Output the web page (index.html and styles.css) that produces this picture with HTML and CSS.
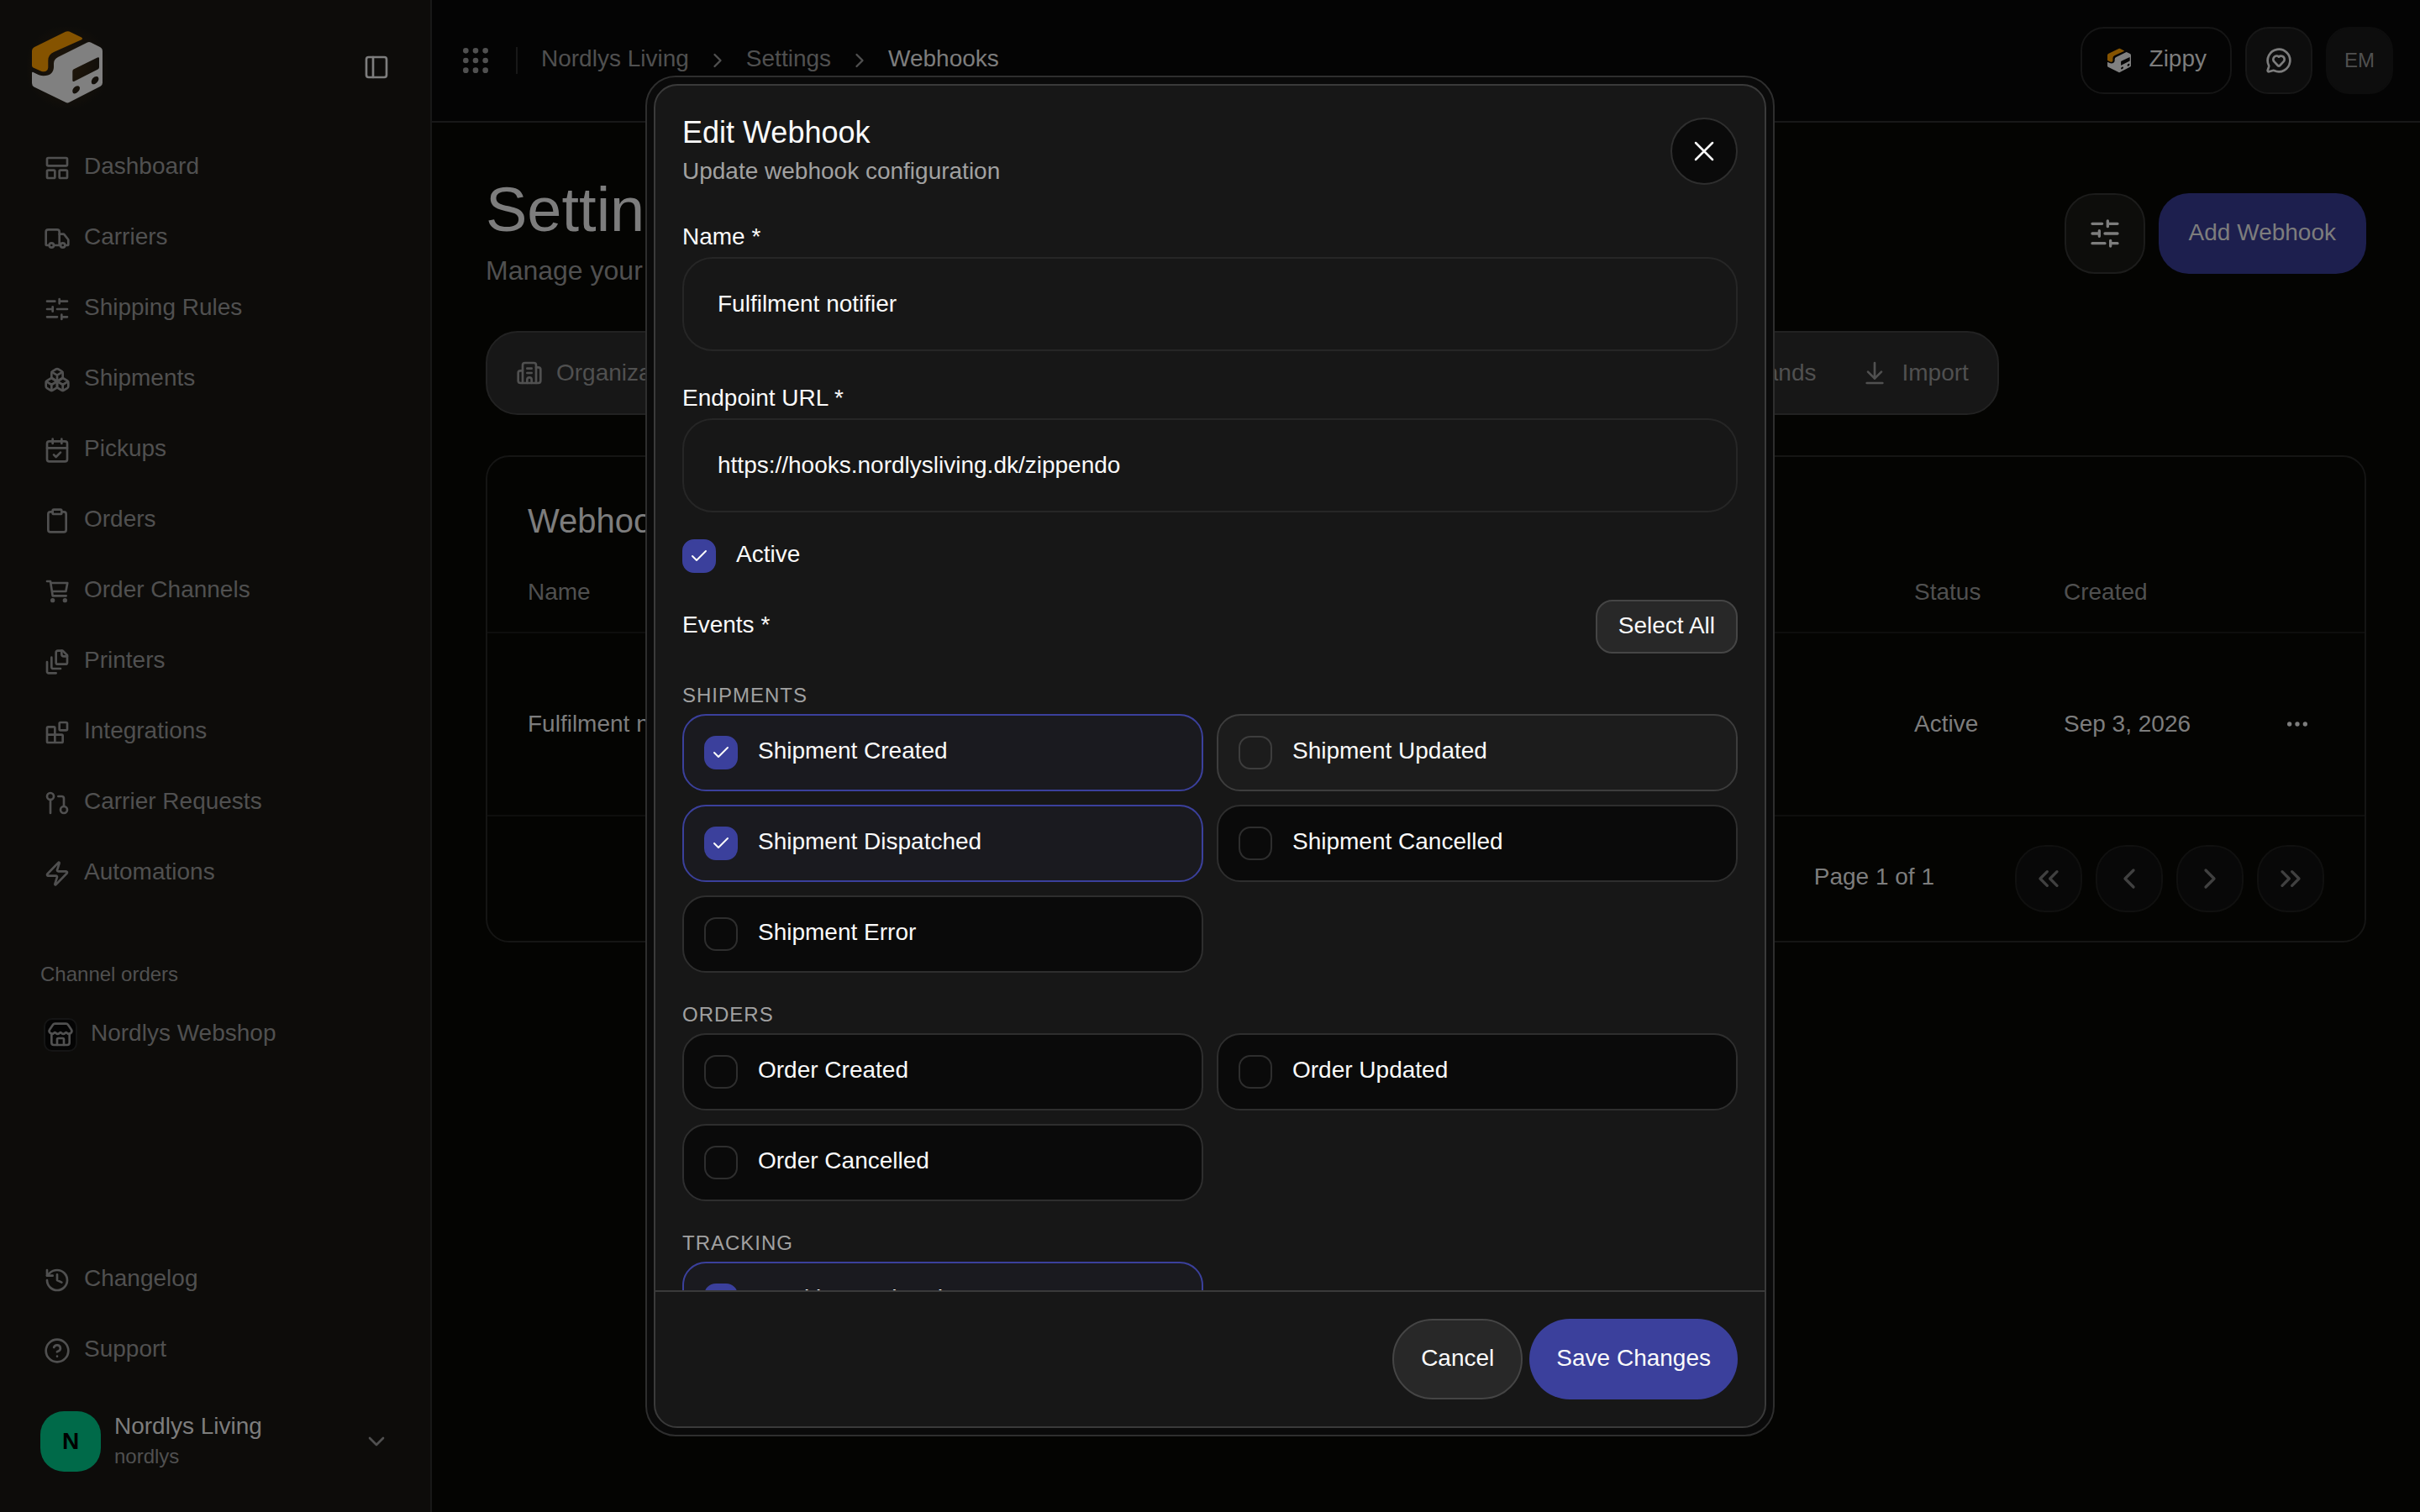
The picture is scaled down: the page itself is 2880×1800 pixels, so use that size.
FILE: index.html
```html
<!DOCTYPE html>
<html lang="en">
<head>
    <meta charset="UTF-8">
    <meta name="viewport" content="width=device-width, initial-scale=1.0">
    <title>Webhooks - Settings</title>
    <link rel="stylesheet" href="styles.css">
</head>
<body>
    <!-- Icon sprite -->
    <svg class="sprite" aria-hidden="true">
        <symbol id="i-logo" viewBox="0 0 96 96">
            <path fill="#855300" stroke="none" d="M46 5.8Q48.300 4.700 50.500 5.600L65 12.500Q67 14 65 15.300L32 30Q25.300 33 25.300 40V48.500Q24.500 54.500 17.500 53L7.500 48.500Q6 47.800 6 46V29Q6 25.500 9 24Z"/>
            <path fill="#808080" stroke="none" fill-rule="evenodd" d="M6 55Q6 53.400 7.600 54Q15 58.300 20 58.200Q31.500 58 32 48V43.500Q32 38.500 37 36L72 18.500Q74 17.500 76 18.500L87 24Q90 25.500 90 29V66.500Q90 69.500 87.500 70.800L50.500 89.800Q48.300 91 46 89.800L8.500 71.500Q6 70 6 67ZM55.500 50.500Q54.300 51 54.300 53V63.500Q54.300 65.700 56.500 64.800L84.500 50.500Q86 49.700 86 48V37.500Q86 35.500 84 36.500ZM54.300 76.500C54.300 80.500 58 80 60.500 77.500C63.500 75 64.200 70.500 60.500 70.200C57.500 70 54.300 73.200 54.300 76.500ZM76.800 65.500C76.800 69.300 80.500 69 83 66.500C86 64 86.500 59.500 83 59C80 58.800 76.800 62.200 76.800 65.500Z"/>
        </symbol>
        <symbol id="i-panel" viewBox="0 0 24 24"><rect width="18" height="18" x="3" y="3" rx="2"/><path d="M9 3v18"/></symbol>
        <symbol id="i-dashboard" viewBox="0 0 24 24"><rect width="18" height="7" x="3" y="3" rx="1"/><rect width="7" height="7" x="3" y="14" rx="1"/><rect width="7" height="7" x="14" y="14" rx="1"/></symbol>
        <symbol id="i-truck" viewBox="0 0 24 24"><path d="M14 18V6a2 2 0 0 0-2-2H4a2 2 0 0 0-2 2v11a1 1 0 0 0 1 1h2"/><path d="M15 18H9"/><path d="M19 18h2a1 1 0 0 0 1-1v-3.650a1 1 0 0 0-.220-.624l-3.480-4.350A1 1 0 0 0 17.520 8H14"/><circle cx="17" cy="18" r="2"/><circle cx="7" cy="18" r="2"/></symbol>
        <symbol id="i-sliders" viewBox="0 0 24 24"><path d="M10 5H3M12 19H3M14 3v4M16 17v4M21 12h-9M21 19h-5M21 5h-7M8 10v4M8 12H3"/></symbol>
        <symbol id="i-boxes" viewBox="0 0 24 24"><path d="M2.970 12.920A2 2 0 0 0 2 14.630v3.240a2 2 0 0 0 .970 1.710l3 1.800a2 2 0 0 0 2.060 0L12 19v-5.500l-5-3-4.030 2.420Z"/><path d="m7 16.500-4.740-2.850M7 16.500l5-3M7 16.500v5.170"/><path d="M12 13.500V19l3.970 2.380a2 2 0 0 0 2.060 0l3-1.800a2 2 0 0 0 .970-1.710v-3.240a2 2 0 0 0-.970-1.710L17 10.500l-5 3Z"/><path d="m17 16.500-5-3M17 16.500l4.740-2.850M17 16.500v5.170"/><path d="M7.970 4.420A2 2 0 0 0 7 6.130v4.370l5 3 5-3V6.130a2 2 0 0 0-.970-1.710l-3-1.800a2 2 0 0 0-2.060 0l-3 1.800Z"/><path d="M12 8 7.260 5.150M12 8l4.740-2.850M12 13.500V8"/></symbol>
        <symbol id="i-calendar" viewBox="0 0 24 24"><path d="M8 2v4M16 2v4"/><rect width="18" height="18" x="3" y="4" rx="2"/><path d="M3 10h18M9 16l2 2 4-4"/></symbol>
        <symbol id="i-clipboard" viewBox="0 0 24 24"><rect width="8" height="4" x="8" y="2" rx="1"/><path d="M16 4h2a2 2 0 0 1 2 2v14a2 2 0 0 1-2 2H6a2 2 0 0 1-2-2V6a2 2 0 0 1 2-2h2"/></symbol>
        <symbol id="i-cart" viewBox="0 0 24 24"><path d="M3 3h3l2 13h12M6.300 4.500H21.200l-1.400 7.500H7.500"/><circle cx="8" cy="20" r="1"/><circle cx="19" cy="20" r="1"/></symbol>
        <symbol id="i-files" viewBox="0 0 24 24"><path d="M21 7h-3a2 2 0 0 1-2-2V2"/><path d="M21 6v6.500c0 .8-.7 1.500-1.500 1.500h-7c-.8 0-1.500-.7-1.500-1.500v-9c0-.8.7-1.500 1.500-1.500H17Z"/><path d="M7 8v8.800c0 .3.200.6.400.8.200.2.500.4.800.4H15"/><path d="M3 12v8.800c0 .3.200.6.400.8.200.2.500.4.800.4H11"/></symbol>
        <symbol id="i-blocks" viewBox="0 0 24 24"><path d="M10 21V8a1 1 0 0 0-1-1H4a1 1 0 0 0-1 1v12a1 1 0 0 0 1 1h12a1 1 0 0 0 1-1v-5a1 1 0 0 0-1-1H3"/><rect width="7" height="7" x="14" y="3" rx="1"/></symbol>
        <symbol id="i-request" viewBox="0 0 24 24"><circle cx="18" cy="18" r="3"/><circle cx="6" cy="6" r="3"/><path d="M13 6h3a2 2 0 0 1 2 2v7M6 9v12"/></symbol>
        <symbol id="i-zap" viewBox="0 0 24 24"><path d="M4 14a1 1 0 0 1-.780-1.630l9.900-10.200a.5.5 0 0 1 .860.460l-1.920 6.020A1 1 0 0 0 13 10h7a1 1 0 0 1 .780 1.630l-9.900 10.200a.5.5 0 0 1-.860-.460l1.920-6.020A1 1 0 0 0 11 14z"/></symbol>
        <symbol id="i-store" viewBox="0 0 24 24"><path d="M15 21v-5a1 1 0 0 0-1-1h-4a1 1 0 0 0-1 1v5"/><path d="M17.774 10.310a1.120 1.120 0 0 0-1.549 0 2.500 2.500 0 0 1-3.451 0 1.120 1.120 0 0 0-1.548 0 2.500 2.500 0 0 1-3.452 0 1.120 1.120 0 0 0-1.549 0 2.500 2.500 0 0 1-3.770-3.248l2.889-4.184A2 2 0 0 1 7 2h10a2 2 0 0 1 1.653.873l2.895 4.192a2.500 2.500 0 0 1-3.774 3.244"/><path d="M4 10.950V19a2 2 0 0 0 2 2h12a2 2 0 0 0 2-2v-8.050"/></symbol>
        <symbol id="i-history" viewBox="0 0 24 24"><path d="M3 12a9 9 0 1 0 9-9 9.750 9.750 0 0 0-6.740 2.740L3 8"/><path d="M3 3v5h5M12 7v5l4 2"/></symbol>
        <symbol id="i-help" viewBox="0 0 24 24"><circle cx="12" cy="12" r="10"/><path d="M9.090 9a3 3 0 0 1 5.830 1c0 2-3 3-3 3M12 17h.01"/></symbol>
        <symbol id="i-down" viewBox="0 0 24 24"><path d="m6 9 6 6 6-6"/></symbol>
        <symbol id="i-left" viewBox="0 0 24 24"><path d="m15 18-6-6 6-6"/></symbol>
        <symbol id="i-right" viewBox="0 0 24 24"><path d="m9 18 6-6-6-6"/></symbol>
        <symbol id="i-first" viewBox="0 0 24 24"><path d="m11 17-5-5 5-5M18 17l-5-5 5-5"/></symbol>
        <symbol id="i-last" viewBox="0 0 24 24"><path d="m6 17 5-5-5-5M13 17l5-5-5-5"/></symbol>
        <symbol id="i-grip" viewBox="0 0 24 24"><circle cx="5" cy="5" r="1"/><circle cx="12" cy="5" r="1"/><circle cx="19" cy="5" r="1"/><circle cx="5" cy="12" r="1"/><circle cx="12" cy="12" r="1"/><circle cx="19" cy="12" r="1"/><circle cx="5" cy="19" r="1"/><circle cx="12" cy="19" r="1"/><circle cx="19" cy="19" r="1"/></symbol>
        <symbol id="i-feedback" viewBox="0 0 24 24"><path d="M2.992 16.342a2 2 0 0 1 .094 1.167l-1.065 3.290a1 1 0 0 0 1.236 1.168l3.413-.998a2 2 0 0 1 1.099.092 10 10 0 1 0-4.777-4.719"/><path d="M7.828 13.070A3 3 0 0 1 12 8.764a3 3 0 0 1 5.004 2.224 3 3 0 0 1-.832 2.083l-3.447 3.620a1 1 0 0 1-1.450-.001z"/></symbol>
        <symbol id="i-building" viewBox="0 0 24 24"><path d="M10 12h4M10 8h4M14 21v-3a2 2 0 0 0-4 0v3"/><path d="M6 10H4a2 2 0 0 0-2 2v7a2 2 0 0 0 2 2h16a2 2 0 0 0 2-2V9a2 2 0 0 0-2-2h-2"/><path d="M6 21V5a2 2 0 0 1 2-2h8a2 2 0 0 1 2 2v16"/></symbol>
        <symbol id="i-import" viewBox="0 0 24 24"><path d="M12 17V3M6 11l6 6 6-6M19 21H5"/></symbol>
        <symbol id="i-dots" viewBox="0 0 24 24"><circle cx="5" cy="12" r="1"/><circle cx="12" cy="12" r="1"/><circle cx="19" cy="12" r="1"/></symbol>
        <symbol id="i-close" viewBox="0 0 24 24"><path d="M18 6 6 18M6 6l12 12"/></symbol>
        <symbol id="i-check" viewBox="0 0 24 24"><path d="M20 6 9 17l-5-5"/></symbol>
    </svg>

    <div class="app">
        <aside class="sidebar">
            <div class="sidebar-top">
                <a class="logo" href="#" aria-label="Home"><svg><use href="#i-logo"/></svg></a>
                <button class="toggle" aria-label="Toggle sidebar"><svg class="icon"><use href="#i-panel"/></svg></button>
            </div>
            <nav class="menu">
                <a href="#"><svg class="icon"><use href="#i-dashboard"/></svg><span class="label">Dashboard</span></a>
                <a href="#"><svg class="icon"><use href="#i-truck"/></svg><span class="label">Carriers</span></a>
                <a href="#"><svg class="icon"><use href="#i-sliders"/></svg><span class="label">Shipping Rules</span></a>
                <a href="#"><svg class="icon"><use href="#i-boxes"/></svg><span class="label">Shipments</span></a>
                <a href="#"><svg class="icon"><use href="#i-calendar"/></svg><span class="label">Pickups</span></a>
                <a href="#"><svg class="icon"><use href="#i-clipboard"/></svg><span class="label">Orders</span></a>
                <a href="#"><svg class="icon"><use href="#i-cart"/></svg><span class="label">Order Channels</span></a>
                <a href="#"><svg class="icon"><use href="#i-files"/></svg><span class="label">Printers</span></a>
                <a href="#"><svg class="icon"><use href="#i-blocks"/></svg><span class="label">Integrations</span></a>
                <a href="#"><svg class="icon"><use href="#i-request"/></svg><span class="label">Carrier Requests</span></a>
                <a href="#"><svg class="icon"><use href="#i-zap"/></svg><span class="label">Automations</span></a>
            </nav>
            <div class="menu-label">Channel orders</div>
            <nav class="menu">
                <a href="#"><span class="shop-icon"><svg class="icon"><use href="#i-store"/></svg></span><span class="label">Nordlys Webshop</span></a>
            </nav>
            <nav class="menu menu-bottom">
                <a href="#"><svg class="icon"><use href="#i-history"/></svg><span class="label">Changelog</span></a>
                <a href="#"><svg class="icon"><use href="#i-help"/></svg><span class="label">Support</span></a>
            </nav>
            <button class="org">
                <span class="org-avatar">N</span>
                <span class="org-text">
                    <span class="org-name">Nordlys Living</span>
                    <span class="org-slug">nordlys</span>
                </span>
                <svg class="icon"><use href="#i-down"/></svg>
            </button>
        </aside>

        <div class="main">
            <header class="topbar">
                <button class="grip" aria-label="Apps"><svg class="icon icon-lg"><use href="#i-grip"/></svg></button>
                <span class="divider"></span>
                <nav class="breadcrumb">
                    <a class="label" href="#">Nordlys Living</a>
                    <svg class="icon icon-sm"><use href="#i-right"/></svg>
                    <a class="label" href="#">Settings</a>
                    <svg class="icon icon-sm"><use href="#i-right"/></svg>
                    <span class="label current">Webhooks</span>
                </nav>
                <div class="topbar-actions">
                    <button class="zippy"><svg class="icon"><use href="#i-logo"/></svg><span class="label">Zippy</span></button>
                    <button class="square" aria-label="Feedback"><svg class="icon"><use href="#i-feedback"/></svg></button>
                    <button class="square user">EM</button>
                </div>
            </header>

            <main class="content">
                <div class="page-head">
                    <div>
                        <h1>Settings</h1>
                        <p>Manage your organization settings</p>
                    </div>
                    <div class="page-actions">
                        <button class="filter" aria-label="Filter"><svg class="icon icon-lg"><use href="#i-sliders"/></svg></button>
                        <button class="add">Add Webhook</button>
                    </div>
                </div>

                <nav class="tabs">
                    <a href="#"><svg class="icon"><use href="#i-building"/></svg>Organization</a>
                    <a href="#"><svg class="icon"><use href="#i-clipboard"/></svg>Members</a>
                    <a href="#"><svg class="icon"><use href="#i-boxes"/></svg>Teams</a>
                    <a href="#"><svg class="icon"><use href="#i-sliders"/></svg>Roles</a>
                    <a href="#"><svg class="icon"><use href="#i-calendar"/></svg>Billing</a>
                    <a href="#"><svg class="icon"><use href="#i-zap"/></svg>Logs</a>
                    <a href="#"><svg class="icon"><use href="#i-request"/></svg>Webhooks</a>
                    <a href="#"><svg class="icon"><use href="#i-store"/></svg>Brands</a>
                    <a href="#"><svg class="icon"><use href="#i-import"/></svg>Import</a>
                </nav>

                <section class="card">
                    <h2>Webhooks</h2>
                    <table>
                        <thead>
                            <tr>
                                <th>Name</th>
                                <th>URL</th>
                                <th class="col-status">Status</th>
                                <th class="col-created">Created</th>
                                <th class="col-actions"></th>
                            </tr>
                        </thead>
                        <tbody>
                            <tr>
                                <td>Fulfilment notifier</td>
                                <td>https://hooks.nordlysliving.dk/zippendo</td>
                                <td>Active</td>
                                <td>Sep 3, 2026</td>
                                <td><button class="row-menu" aria-label="Row actions"><svg class="icon"><use href="#i-dots"/></svg></button></td>
                            </tr>
                        </tbody>
                    </table>
                    <div class="pager">
                        <span class="label">Page 1 of 1</span>
                        <div class="pager-buttons">
                            <button aria-label="First page"><svg class="icon icon-lg"><use href="#i-first"/></svg></button>
                            <button aria-label="Previous page"><svg class="icon icon-lg"><use href="#i-left"/></svg></button>
                            <button aria-label="Next page"><svg class="icon icon-lg"><use href="#i-right"/></svg></button>
                            <button aria-label="Last page"><svg class="icon icon-lg"><use href="#i-last"/></svg></button>
                        </div>
                    </div>
                </section>
            </main>
        </div>
    </div>

    <!-- Edit webhook dialog -->
    <div class="overlay">
        <div class="modal" role="dialog" aria-labelledby="modal-title">
            <form class="modal-inner">
                <div class="modal-scroll">
                    <div class="modal-head">
                        <div>
                            <h2 id="modal-title">Edit Webhook</h2>
                            <p>Update webhook configuration</p>
                        </div>
                        <button type="button" class="close" aria-label="Close"><svg class="icon icon-lg"><use href="#i-close"/></svg></button>
                    </div>

                    <div class="field">
                        <label for="name">Name *</label>
                        <input type="text" id="name" value="Fulfilment notifier">
                    </div>
                    <div class="field">
                        <label for="url">Endpoint URL *</label>
                        <input type="text" id="url" value="https://hooks.nordlysliving.dk/zippendo">
                    </div>

                    <label class="active-row">
                        <span class="check"><input type="checkbox" checked><svg class="icon"><use href="#i-check"/></svg></span>
                        <span class="label">Active</span>
                    </label>

                    <div class="events-head">
                        <span class="label">Events *</span>
                        <button type="button" class="select-all">Select All</button>
                    </div>

                    <h3>Shipments</h3>
                    <div class="events">
                        <label class="event checked"><span class="check"><input type="checkbox" checked><svg class="icon"><use href="#i-check"/></svg></span><span class="label">Shipment Created</span></label>
                        <label class="event hovered"><span class="check"><input type="checkbox"></span><span class="label">Shipment Updated</span></label>
                        <label class="event checked"><span class="check"><input type="checkbox" checked><svg class="icon"><use href="#i-check"/></svg></span><span class="label">Shipment Dispatched</span></label>
                        <label class="event"><span class="check"><input type="checkbox"></span><span class="label">Shipment Cancelled</span></label>
                        <label class="event"><span class="check"><input type="checkbox"></span><span class="label">Shipment Error</span></label>
                    </div>

                    <h3>Orders</h3>
                    <div class="events">
                        <label class="event"><span class="check"><input type="checkbox"></span><span class="label">Order Created</span></label>
                        <label class="event"><span class="check"><input type="checkbox"></span><span class="label">Order Updated</span></label>
                        <label class="event"><span class="check"><input type="checkbox"></span><span class="label">Order Cancelled</span></label>
                    </div>

                    <h3>Tracking</h3>
                    <div class="events">
                        <label class="event checked"><span class="check"><input type="checkbox" checked><svg class="icon"><use href="#i-check"/></svg></span><span class="label">Tracking Updated</span></label>
                    </div>
                </div>
                <div class="modal-foot">
                    <button type="button" class="cancel">Cancel</button>
                    <button type="submit" class="save">Save Changes</button>
                </div>
            </form>
        </div>
    </div>
</body>
</html>
```
FILE: styles.css
```css
* {
    box-sizing: border-box;
}
body {
    margin: 0;
    background-color: #040402;
    color: #7d7d7d;
    font-family: "Liberation Sans", Arial, sans-serif;
    font-size: 28px;
    line-height: 40px;
}
h1, h2, h3, p {
    margin: 0;
    font-weight: normal;
}
a {
    color: inherit;
    text-decoration: none;
}
button, input {
    font: inherit;
    color: inherit;
    margin: 0;
}
button {
    display: flex;
    align-items: center;
    justify-content: center;
    padding: 0;
    background: none;
    border: none;
    cursor: pointer;
    white-space: nowrap;
}
.sprite {
    display: none;
}
.icon {
    width: 32px;
    height: 32px;
    flex-shrink: 0;
    fill: none;
    stroke: currentColor;
    stroke-width: 2;
    stroke-linecap: round;
    stroke-linejoin: round;
}
.icon-sm {
    width: 28px;
    height: 28px;
}
.icon-lg {
    width: 40px;
    height: 40px;
}
/* text next to an icon or a checkbox */
.label {
    line-height: 36px;
    padding-bottom: 4px;
}
.app {
    display: flex;
    height: 100vh;
}

/* Sidebar */
.sidebar {
    display: flex;
    flex-direction: column;
    width: 514px;
    flex-shrink: 0;
    padding: 32px 32px 48px;
    background-color: #0d0c0a;
    border-right: 2px solid #181818;
    color: #505050;
}
.sidebar-top {
    display: flex;
    justify-content: space-between;
    align-items: center;
    padding-right: 16px;
    margin-bottom: 32px;
}
.logo, .logo svg {
    display: block;
    width: 96px;
    height: 96px;
}
.logo {
    background: radial-gradient(circle, #21170a 0%, #0d0c0a 75%);
}
.toggle {
    color: #7d7d7d;
}
.menu {
    display: flex;
    flex-direction: column;
    gap: 4px;
}
.menu a {
    display: flex;
    align-items: center;
    gap: 16px;
    height: 80px;
    padding: 0 20px;
}
.menu-label {
    margin: 64px 16px 16px;
    font-size: 24px;
    line-height: 32px;
}
.shop-icon {
    display: flex;
    align-items: center;
    justify-content: center;
    width: 40px;
    height: 40px;
    background-color: #040404;
    border: 2px solid #151515;
    border-radius: 10px;
}
.menu-bottom {
    margin-top: auto;
}
.org {
    gap: 16px;
    margin-top: 32px;
    padding: 0 16px;
    text-align: left;
}
.org-avatar {
    display: flex;
    align-items: center;
    justify-content: center;
    width: 72px;
    height: 72px;
    background-color: #006a49;
    border-radius: 28px;
    color: #000;
    font-weight: bold;
}
.org-text {
    display: flex;
    flex-direction: column;
    flex: 1;
    line-height: 36px;
}
.org-name {
    color: #7d7d7d;
}
.org-slug {
    font-size: 24px;
}

/* Top bar */
.main {
    display: flex;
    flex-direction: column;
    flex: 1;
    min-width: 0;
}
.topbar {
    display: flex;
    align-items: center;
    height: 146px;
    padding: 0 32px;
    background-color: #040404;
    border-bottom: 2px solid #181818;
}
.grip {
    color: #505050;
}
.divider {
    width: 2px;
    height: 32px;
    margin: 0 28px;
    background-color: #181818;
}
.breadcrumb {
    display: flex;
    align-items: center;
    gap: 20px;
    color: #505050;
}
.breadcrumb .current {
    color: #7d7d7d;
}
.topbar-actions {
    display: flex;
    gap: 16px;
    margin-left: auto;
}
.zippy {
    gap: 20px;
    height: 80px;
    padding: 0 28px;
    border: 2px solid #151515;
    border-radius: 28px;
}
.square {
    width: 80px;
    height: 80px;
    background-color: #0d0d0d;
    border: 2px solid #171717;
    border-radius: 28px;
}
.square.user {
    border-color: #0d0d0d;
    color: #505050;
    font-size: 24px;
}

/* Page */
.content {
    flex: 1;
    padding: 64px;
}
.page-head {
    display: flex;
    justify-content: space-between;
    height: 136px;
    margin-bottom: 48px;
}
.page-head h1 {
    font-size: 74px;
    line-height: 80px;
}
.page-head p {
    margin-top: 12px;
    color: #505050;
    font-size: 32px;
}
.page-actions {
    display: flex;
    align-items: center;
    gap: 16px;
}
.filter {
    width: 96px;
    height: 96px;
    background-color: #0d0d0b;
    border: 2px solid #1c1c1b;
    border-radius: 36px;
}
.add {
    height: 96px;
    padding: 0 36px 2px;
    background-color: #1d1f4e;
    border-radius: 36px;
}
.tabs {
    display: flex;
    width: fit-content;
    height: 100px;
    padding: 0 7px;
    margin-bottom: 48px;
    background-color: #171717;
    border: 2px solid #222;
    border-radius: 38px;
    color: #505050;
}
.tabs a {
    display: flex;
    align-items: center;
    gap: 16px;
    padding: 0 27px;
}
.card {
    border: 2px solid #151514;
    border-radius: 28px;
}
.card h2 {
    padding: 52px 48px 14px;
    font-size: 40px;
    line-height: 48px;
}
table {
    width: 100%;
    border-spacing: 0;
    text-align: left;
}
th, td {
    padding: 0 0 0 48px;
    border-bottom: 2px solid #0e0e0d;
    font-weight: normal;
}
th {
    height: 96px;
    color: #505050;
}
td {
    height: 218px;
}
.col-status {
    width: 178px;
}
.col-created {
    width: 246px;
}
.col-actions {
    width: 160px;
}
.row-menu {
    width: 64px;
    height: 64px;
}
.pager {
    display: flex;
    justify-content: flex-end;
    align-items: center;
    gap: 96px;
    padding: 34px 48px;
}
.pager-buttons {
    display: flex;
    gap: 16px;
}
.pager-buttons button {
    width: 80px;
    height: 80px;
    background-color: #080808;
    border: 2px solid #10100f;
    border-radius: 36px;
    color: #404040;
}

/* Dialog */
.overlay {
    position: fixed;
    inset: 0;
    display: flex;
    align-items: center;
    justify-content: center;
    color: #fafafa;
}
.modal {
    display: flex;
    width: 1344px;
    height: 90vh;
    padding: 8px;
    background-color: #0a0a0a;
    border: 2px solid #2e2e2e;
    border-radius: 36px;
}
.modal-inner {
    display: flex;
    flex-direction: column;
    flex: 1;
    min-width: 0;
    background-color: #171717;
    border: 2px solid #3a3a3a;
    border-radius: 28px;
    overflow: hidden;
}
.modal-scroll {
    flex: 1;
    min-height: 0;
    padding: 32px 32px 0;
    overflow: hidden;
}
.modal-head {
    display: flex;
    justify-content: space-between;
    align-items: center;
}
.modal-head h2 {
    font-size: 36px;
    line-height: 48px;
}
.modal-head p {
    color: #a1a1a1;
    line-height: 44px;
}
.close {
    width: 80px;
    height: 80px;
    background-color: #0a0a0a;
    border: 2px solid #2e2e2e;
    border-radius: 50%;
}
.close .icon {
    stroke-width: 1.5;
}
.field {
    margin-top: 40px;
}
.field label {
    display: block;
    margin-bottom: 8px;
    line-height: 32px;
}
.field input {
    display: block;
    width: 100%;
    height: 112px;
    padding: 0 40px;
    background: none;
    border: 2px solid #262626;
    border-radius: 36px;
    outline: none;
}
.active-row {
    display: flex;
    align-items: center;
    gap: 24px;
    margin: 32px 0;
}
.check {
    display: grid;
    place-items: center;
    width: 40px;
    height: 40px;
}
.check input, .check .icon {
    grid-area: 1 / 1;
}
.check input {
    appearance: none;
    width: 40px;
    height: 40px;
    border: 2px solid #2e2e2e;
    border-radius: 14px;
}
.check input:checked {
    background-color: #3b409c;
    border-color: #3b409c;
}
.check .icon {
    width: 24px;
    height: 24px;
    pointer-events: none;
}
.events-head {
    display: flex;
    justify-content: space-between;
    align-items: center;
}
.select-all {
    height: 64px;
    padding: 0 25px 2px;
    background-color: #282828;
    border: 2px solid #454545;
    border-radius: 20px;
}
.modal h3 {
    margin: 36px 0 8px;
    color: #a1a1a1;
    font-size: 24px;
    line-height: 28px;
    letter-spacing: 1px;
    text-transform: uppercase;
}
.events {
    display: grid;
    grid-template-columns: 1fr 1fr;
    gap: 16px;
}
.event {
    display: flex;
    align-items: center;
    gap: 24px;
    padding: 24px;
    background-color: #0a0a0a;
    border: 2px solid #2e2e2e;
    border-radius: 28px;
}
.event.checked {
    background-color: #1a1a1f;
    border-color: #3b409c;
}
.event.hovered, .event.hovered input {
    border-color: #3d3d3d;
}
.event.hovered {
    background-color: #1c1c1c;
}
.modal-foot {
    display: flex;
    justify-content: flex-end;
    gap: 8px;
    padding: 32px;
    border-top: 2px solid #3a3a3a;
}
.modal-foot button {
    height: 96px;
    padding: 0 32px 2px;
    border-radius: 48px;
}
.cancel {
    background-color: #282828;
    border: 2px solid #454545;
}
.save {
    background-color: #3b409c;
}
```
